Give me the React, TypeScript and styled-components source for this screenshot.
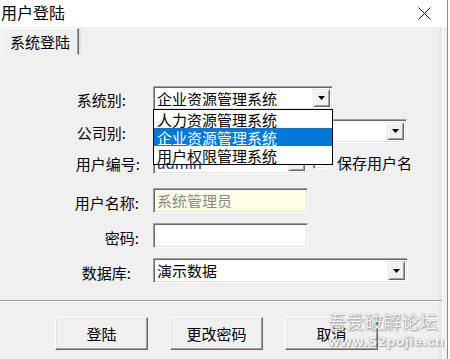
import React from "react";
import styled, {createGlobalStyle} from "styled-components";

const GlobalStyle = createGlobalStyle`
  html, body {
    margin: 0;
    padding: 0;
    background: #ffffff;
  }
  * {
    box-sizing: border-box;
  }
`;

const Window = styled.div`
  position: relative;
  width: 448px;
  height: 359px;
  display: flex;
  flex-direction: column;
  background: #f0f0f0;
  border-right: 1px solid #8a8a8a;
  font-family: "Noto Sans CJK SC", "Liberation Sans", sans-serif;
  color: #000;
  overflow: hidden;
`;

const TitleBar = styled.div`
  height: 27px;
  flex: none;
  display: flex;
  align-items: center;
  justify-content: space-between;
  background: #ffffff;
  padding: 0 16px 0 1px;

  .title {
    font-size: 16px;
    line-height: 16px;
    margin-top: -3px;
  }
`;

const Body = styled.div`
  flex: 1;
  display: flex;
  flex-direction: column;
  border-right: 1px solid #ffffff;
  box-shadow: inset -3px 0 0 #e6e6e6;
  margin-right: 4px;
`;

const TabStrip = styled.div`
  height: 28px;
  flex: none;
  display: flex;
  align-items: flex-end;
  padding-left: 1px;
`;

const Tab = styled.div`
  height: 27px;
  width: 78px;
  display: flex;
  align-items: center;
  justify-content: center;
  font-size: 15px;
  line-height: 15px;
  border: 1px solid;
  border-color: #ffffff #696969 transparent #ffffff;
  box-shadow: inset -1px 0 0 #a0a0a0, 2px 0 0 #e3e3e3;
`;

const Content = styled.div`
  position: relative;
  height: 245px;
  flex: none;
  padding-top: 31px;
  display: flex;
  flex-direction: column;
`;

const Row = styled.div<{ $mt: number; $h: number }>`
  display: flex;
  align-items: center;
  height: ${p => p.$h}px;
  margin-top: ${p => p.$mt}px;
`;

const Label = styled.div<{ $pad: number }>`
  width: 153px;
  flex: none;
  text-align: right;
  padding-right: ${p => p.$pad}px;
  padding-top: 3px;
  font-size: 15px;
  line-height: 15px;
  white-space: nowrap;
`;

const Field = styled.div<{ $w: number; $bg?: string; $fg?: string }>`
  position: relative;
  width: ${p => p.$w}px;
  height: 100%;
  display: flex;
  align-items: center;
  padding: 0 2px 0 3px;
  background: ${p => p.$bg || "#ffffff"};
  color: ${p => p.$fg || "#000000"};
  border: 1px solid;
  border-color: #a0a0a0 #ffffff #ffffff #a0a0a0;
  box-shadow: inset 1px 1px 0 #696969, inset -1px -1px 0 #e3e3e3;
  font-size: 15px;
  line-height: 15px;
  white-space: nowrap;

  .text {
    flex: 1;
    overflow: hidden;
  }
`;

const ArrowButton = styled.div`
  width: 17px;
  height: calc(100% - 4px);
  flex: none;
  display: flex;
  align-items: center;
  justify-content: center;
  background: #f0f0f0;
  border: 1px solid;
  border-color: #e3e3e3 #696969 #696969 #e3e3e3;
  box-shadow: inset 1px 1px 0 #ffffff, inset -1px -1px 0 #a0a0a0;
`;

const CheckBox = styled.div`
  width: 13px;
  height: 13px;
  margin-left: 5px;
  background: #ffffff;
  border: 1px solid;
  border-color: #a0a0a0 #ffffff #ffffff #a0a0a0;
  box-shadow: inset 1px 1px 0 #696969, inset -1px -1px 0 #e3e3e3;
`;

const CheckText = styled.span`
  margin-left: 11px;
  font-size: 15px;
  line-height: 15px;
`;

const DropList = styled.ul`
  position: absolute;
  left: 153px;
  top: 54px;
  width: 180px;
  margin: 0;
  padding: 0;
  list-style: none;
  background: #ffffff;
  border: 1px solid #000000;
`;

const DropItem = styled.li<{ $active?: boolean }>`
  height: 18px;
  padding-left: 3px;
  display: flex;
  align-items: center;
  font-size: 15px;
  line-height: 15px;
  background: ${p => (p.$active ? "#0078d7" : "transparent")};
  color: ${p => (p.$active ? "#ffffff" : "#000000")};
`;

const Separator = styled.div`
  height: 2px;
  flex: none;
  border-top: 1px solid #a0a0a0;
  border-bottom: 1px solid #ffffff;
`;

const ButtonBar = styled.div`
  flex: 1;
  display: flex;
  gap: 22px;
  padding: 15px 0 0 55px;
`;

const Button = styled.div`
  width: 93px;
  height: 33px;
  display: flex;
  align-items: center;
  justify-content: center;
  font-size: 15px;
  line-height: 15px;
  background: #f0f0f0;
  border: 1px solid;
  border-color: #ffffff #696969 #696969 #ffffff;
  box-shadow: inset -1px -1px 0 #a0a0a0, inset 1px 1px 0 #e3e3e3;
`;

const Watermark = styled.div`
  position: absolute;
  left: 328px;
  bottom: 10px;
  display: flex;
  flex-direction: column;
  align-items: flex-start;
  color: rgba(255, 255, 255, 0.95);
  text-shadow: 0 0 1px rgba(60, 60, 60, 0.75), 1px 1px 1px rgba(80, 80, 80, 0.4);
  pointer-events: none;

  .cn {
    font-size: 18px;
    line-height: 18px;
    letter-spacing: 0.3px;
  }

  .url {
    margin-top: 5px;
    font-family: "DejaVu Sans", "Liberation Sans", sans-serif;
    font-size: 13px;
    line-height: 14px;
    font-weight: bold;
  }
`;

const Arrow = () => (
    <svg width="7" height="4" viewBox="0 0 7 4">
        <polygon points="0,0 7,0 3.5,4" fill="#000"/>
    </svg>
);

const CloseIcon = () => (
    <svg width="13" height="13" viewBox="0 0 13 13">
        <path d="M0.5 0.5 L12.5 12.5 M12.5 0.5 L0.5 12.5" stroke="#111" strokeWidth="1"/>
    </svg>
);

const systems = ["人力资源管理系统", "企业资源管理系统", "用户权限管理系统"];

const App = () => {
    return (
        <>
            <GlobalStyle/>
            <Window>
                <TitleBar>
                    <span className="title">用户登陆</span>
                    <CloseIcon/>
                </TitleBar>
                <Body>
                    <TabStrip>
                        <Tab>系统登陆</Tab>
                    </TabStrip>
                    <Content>
                        <Row $mt={0} $h={24}>
                            <Label $pad={27}>系统别:</Label>
                            <Field $w={180}>
                                <span className="text">企业资源管理系统</span>
                                <ArrowButton><Arrow/></ArrowButton>
                            </Field>
                        </Row>
                        <Row $mt={9} $h={24}>
                            <Label $pad={27}>公司别:</Label>
                            <Field $w={254}>
                                <span className="text"></span>
                                <ArrowButton><Arrow/></ArrowButton>
                            </Field>
                        </Row>
                        <Row $mt={7} $h={24}>
                            <Label $pad={13}>用户编号:</Label>
                            <Field $w={155} $fg="#1c2f6e">
                                <span className="text">admin</span>
                                <ArrowButton><Arrow/></ArrowButton>
                            </Field>
                            <CheckBox/>
                            <CheckText>保存用户名</CheckText>
                        </Row>
                        <Row $mt={14} $h={25}>
                            <Label $pad={14}>用户名称:</Label>
                            <Field $w={155} $bg="#fefee6" $fg="#8a8a8a">
                                <span className="text">系统管理员</span>
                            </Field>
                        </Row>
                        <Row $mt={10} $h={25}>
                            <Label $pad={14}>密码:</Label>
                            <Field $w={155}>
                                <span className="text"></span>
                            </Field>
                        </Row>
                        <Row $mt={10} $h={25}>
                            <Label $pad={22}>数据库:</Label>
                            <Field $w={255}>
                                <span className="text">演示数据</span>
                                <ArrowButton><Arrow/></ArrowButton>
                            </Field>
                        </Row>
                        <DropList>
                            {systems.map((s, i) => (
                                <DropItem key={s} $active={i === 1}>{s}</DropItem>
                            ))}
                        </DropList>
                    </Content>
                    <Separator/>
                    <ButtonBar>
                        <Button>登陆</Button>
                        <Button>更改密码</Button>
                        <Button>取消</Button>
                    </ButtonBar>
                </Body>
                <Watermark>
                    <span className="cn">吾爱破解论坛</span>
                    <span className="url">www.52pojie.cn</span>
                </Watermark>
            </Window>
        </>
    );
};

export default App;
